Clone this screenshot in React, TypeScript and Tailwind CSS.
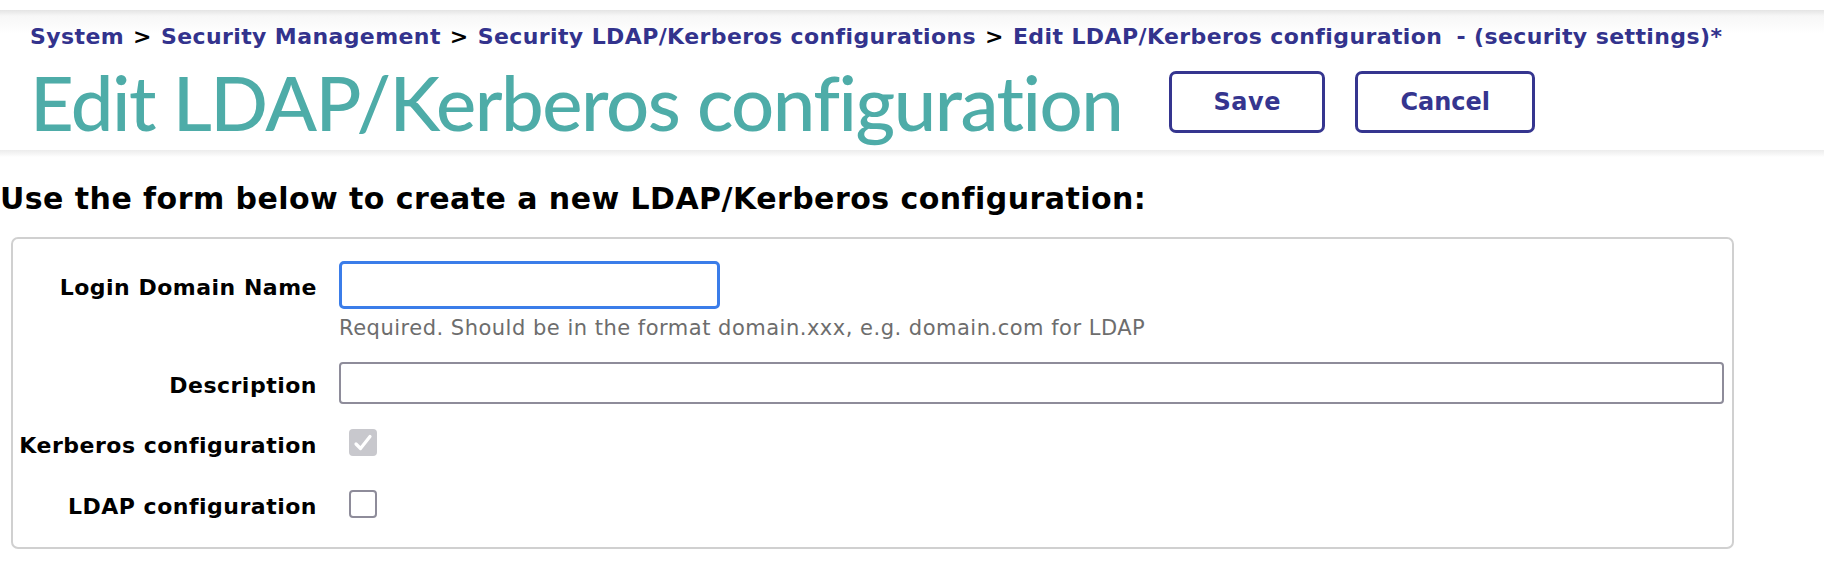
import React from 'react';

const CRUMBS = ['System', 'Security Management', 'Security LDAP/Kerberos configurations'];

const Label = ({ children }: { children: React.ReactNode }) => (
  <div className="flex translate-y-[3px] items-center justify-end whitespace-nowrap text-[22px] font-bold leading-[28px] tracking-[0.5px] text-black">
    {children}
  </div>
);

export default function App() {
  return (
    <div className="min-h-screen bg-white font-['DejaVu_Sans',sans-serif]">
      <div className="h-[10px]" />
      <header className="h-[140px] bg-[linear-gradient(to_bottom,#e4e4e4,#f7f7f7_6px,#ffffff_24px)] pl-[30px] pt-[13px]">
        <nav className="flex items-center whitespace-nowrap text-[22px] font-bold leading-[28px] tracking-[0.4px] text-[#33338d]">
          {CRUMBS.map((c) => (
            <React.Fragment key={c}>
              <span>{c}</span>
              <span className="mx-[9px] text-black">&gt;</span>
            </React.Fragment>
          ))}
          <span>Edit LDAP/Kerberos configuration</span>
          <span className="ml-[14px]">- (security settings)*</span>
        </nav>
        <div className="mt-[3px] flex items-center">
          <h1 className="font-['Lato',sans-serif] text-[76px] font-medium leading-[96px] tracking-[-1.5px] text-[#4eaca8]">
            Edit LDAP/Kerberos configuration
          </h1>
          <div className="ml-[47px] flex gap-[30px]">
            <button className="h-[62px] w-[156px] rounded-[7px] border-[3px] border-[#35358f] text-[24px] font-bold tracking-[0.5px] text-[#35358f]">
              Save
            </button>
            <button className="h-[62px] w-[180px] rounded-[7px] border-[3px] border-[#35358f] text-[24px] font-bold text-[#35358f]">
              Cancel
            </button>
          </div>
        </div>
      </header>
      <div className="h-[7px] bg-[linear-gradient(to_bottom,#ececec,#f6f6f6_4px,#ffffff)]" />

      <h2 className="mt-[24px] whitespace-nowrap text-[30px] font-bold leading-[36px] tracking-[0.45px] text-black">
        Use the form below to create a new LDAP/Kerberos configuration:
      </h2>

      <div className="ml-[11px] mt-[20px] w-[1723px] rounded-[7px] border-2 border-[#d0d0d0] pb-[29px] pr-[8px] pt-[22px]">
        <div className="grid grid-cols-[304px_1fr] gap-x-[22px]">
          <Label>Login Domain Name</Label>
          <div>
            <input className="h-[48px] w-[381px] rounded-[5px] border-[3px] border-[#3b7de9] bg-white outline-none" />
          </div>
          <div />
          <div className="mt-[6px] whitespace-nowrap text-[21px] leading-[26px] tracking-[0.5px] text-[#6d6d6d]">
            Required. Should be in the format domain.xxx, e.g. domain.com for LDAP
          </div>

          <div className="col-span-2 h-[21px]" />
          <Label>Description</Label>
          <input className="h-[42px] w-full rounded-[4px] border-2 border-[#8e8c9a] bg-white outline-none" />

          <div className="col-span-2 h-[25px]" />
          <Label>Kerberos configuration</Label>
          <div className="flex h-[27px] items-center pl-[10px]">
            <div className="flex h-[27px] w-[28px] items-center justify-center rounded-[4px] bg-[#c8c8cd]">
              <svg width="24" height="24" viewBox="0 0 24 24" fill="none" stroke="#ffffff" strokeWidth="3.2" strokeLinecap="round" strokeLinejoin="round">
                <path d="M5 13l4.5 4.5L19 5.5" />
              </svg>
            </div>
          </div>

          <div className="col-span-2 h-[33px]" />
          <Label>LDAP configuration</Label>
          <div className="flex h-[28px] items-center pl-[10px]">
            <div className="h-[28px] w-[28px] rounded-[4px] border-2 border-[#8e8c9a] bg-white" />
          </div>
        </div>
      </div>
    </div>
  );
}
